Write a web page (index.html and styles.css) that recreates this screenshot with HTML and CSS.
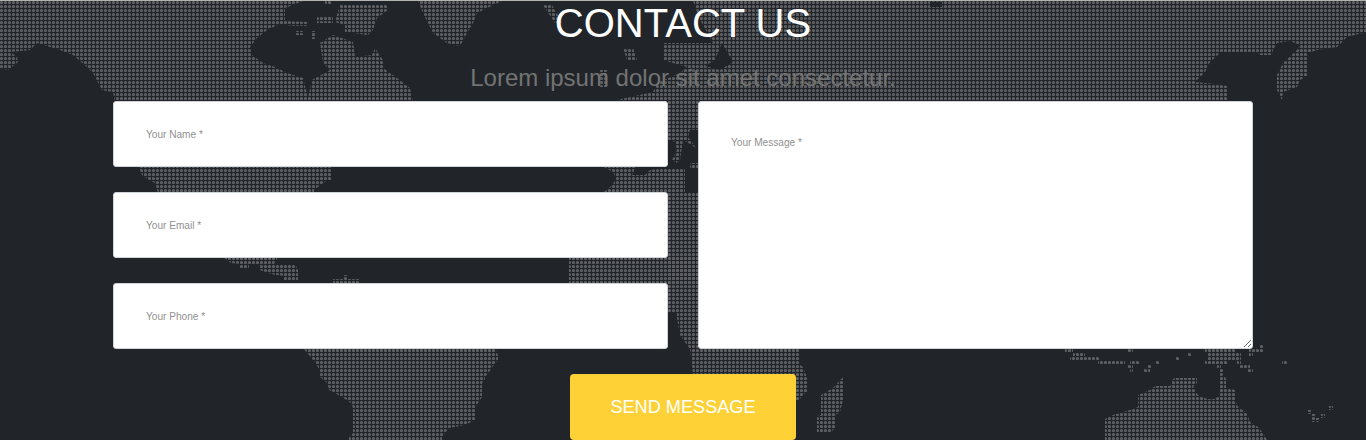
FILE: index.html
```html
<!DOCTYPE html>
<html lang="en">

<head>
    <meta charset="UTF-8">
    <meta name="viewport" content="width=device-width, initial-scale=1">
    <title>Contact Us</title>
    <link rel="stylesheet" href="styles.css">
</head>

<body>
    <section class="contact">
        <svg class="map" width="1366" height="440" viewBox="0 0 1366 440" aria-hidden="true">
            <defs>
                <pattern id="dots" width="4" height="4" patternUnits="userSpaceOnUse">
                    <circle cx="1.5" cy="2.5" r="1.6" fill="#5d5f62"></circle>
                </pattern>
            </defs>
            <g fill="url(#dots)">
                <!-- north america / top left -->
                <polygon points="0,1 303,1 285,8 285,21 307,22 307,26 293,26 280,24 267,30 257,38 250,47 252,55 263,63 275,67 287,73 303,78 308,98 312,80 330,70 323,63 320,43 333,35 353,42 355,57 372,55 375,48 383,60 383,68 397,78 410,88 413,102 115,102 113,92 102,90 93,73 87,67 73,55 60,50 37,43 30,50 10,52 17,57 18,62 8,70 0,68"></polygon>
                <polygon points="295,31 303,31 303,35 295,35"></polygon>
                <polygon points="311,31 315,31 315,39 311,39"></polygon>
                <polygon points="317,16 333,16 333,23 317,23"></polygon>
                <polygon points="325,1 332,1 332,4 325,4"></polygon>
                <polygon points="337,15 340,5 387,4 388,10 377,18 373,30 368,35 345,32 345,25 335,22"></polygon>
                <polygon points="418,1 502,1 483,10 477,13 473,23 467,33 460,46 447,43 433,33 423,13"></polygon>
                <polygon points="543,5 552,5 562,23 555,23"></polygon>
                <polygon points="623,48 633,48 637,60 627,60"></polygon>
                <polygon points="600,70 608,70 608,87 600,87"></polygon>
                <!-- top band right of the title -->
                <polygon points="693,1 1366,1 1366,32 1347,37 1337,47 1317,50 1308,53 1308,75 1300,80 1297,87 1283,92 1282,100 1277,90 1277,75 1283,63 1297,50 1300,45 1290,41 1277,43 1273,50 1272,55 1260,55 1257,52 1250,52 1220,53 1210,62 1205,72 1195,82 1215,84 1227,86 1227,102 608,102 653,92 657,83 680,73 687,67 673,63 663,60 663,43 713,43 700,20"></polygon>
                <!-- between and below the fields -->
                <polygon points="138,166 331,166 331,180 327,180 322,184 314,190 314,193 158,193 155,183 149,180 142,175"></polygon>
                <polygon points="223,257 278,257 274,264 295,264 298,270 298,280 284,280 284,276 271,274 260,270 260,265 249,265 249,269 240,269 240,264 231,263"></polygon>
                <polygon points="333,279 360,279 360,284 333,284"></polygon>
                <polygon points="343,275 347,275 347,279 343,279"></polygon>
                <polygon points="569,257 698,257 698,284 569,284"></polygon>
                <polygon points="602,166 636,166 632,175 645,175 650,170 668,168 685,168 685,193 602,193 607,190 613,184 616,178 613,172"></polygon>
                <polygon points="660,100 698,100 698,130 690,130 688,137 698,150 692,145 683,140 680,160 676,163 672,160 677,150 675,142 668,140 660,140"></polygon>
                <polygon points="690,163 698,163 698,169 690,169"></polygon>
                <polygon points="668,192 698,192 698,349 690,349 680,335 677,318 677,312 668,312"></polygon>
                <!-- africa and madagascar -->
                <polygon points="690,349 800,349 800,365 803,367 807,378 807,392 803,395 799,400 790,400 790,374 693,374"></polygon>
                <polygon points="843,377 843,400 840,412 835,415 835,428 830,433 817,433 817,416 821,415 821,395 833,388"></polygon>
                <!-- south america -->
                <polygon points="304,349 495,349 498,355 498,360 495,363 489,372 485,377 485,380 482,383 482,397 478,403 475,408 475,420 465,425 449,428 445,433 442,437 442,440 349,440 349,437 353,433 353,408 351,403 342,397 333,392 329,390 327,383 324,380 320,377 320,372 316,363 313,360 309,355"></polygon>
                <!-- australia -->
                <polygon points="1175,378 1197,378 1197,383 1193,387 1198,395 1207,399 1215,399 1220,395 1220,374 1226,378 1226,388 1235,390 1235,400 1238,407 1247,413 1250,422 1258,427 1263,433 1267,440 1105,440 1105,419 1113,415 1127,411 1138,407 1138,395 1150,390 1155,386 1170,386 1172,380"></polygon>
                <!-- islands, one row of dots each -->
                <path d="M1065 349h8v4h-8zM1073 353h12v4h-12zM1070 357h30v4h-30zM1098 361h27v4h-27zM1130 361h10v4h-10zM1127 365h6v4h-6zM1147 365h5v4h-5zM1130 369h3v4h-3zM1143 369h7v4h-7zM1127 349h6v4h-6zM1155 361h5v4h-5zM1188 353h3v4h-3zM1176 357h3v4h-3z"></path>
                <path d="M1205 349h30v4h-30zM1208 353h33v4h-33zM1208 357h33v4h-33zM1205 361h22v4h-22zM1237 361h4v4h-4zM1217 365h4v4h-4zM1240 365h10v4h-10zM1248 369h5v4h-5zM1220 369h3v6h-3zM1249 349h14v4h-14zM1249 353h4v4h-4zM1260 345h3v4h-3zM1282 361h5v4h-5z"></path>
                <path d="M1308 410h4v4h-4zM1329 406h4v4h-4zM1321 414h4v4h-4zM1312 414h4v4h-4zM1312 418h8v4h-8z"></path>
            </g>
            <!-- gulfs cut out of the top band -->
            <g fill="#212529">
                <polygon points="722,43 733,62 720,70 705,66 715,60"></polygon>
                <polygon points="930,2 942,2 942,7 930,7"></polygon>
            </g>
        </svg>

        <div class="container">
            <h1>CONTACT US</h1>
            <p class="lead">Lorem ipsum dolor sit amet consectetur.</p>

            <form class="contact-form">
                <div class="fields">
                    <input type="text" placeholder="Your Name *">
                    <input type="email" placeholder="Your Email *">
                    <input type="tel" placeholder="Your Phone *">
                </div>
                <textarea placeholder="Your Message *"></textarea>
                <button type="submit">SEND MESSAGE</button>
            </form>
        </div>
    </section>
</body>

</html>
```

FILE: styles.css
```css
html,
body {
    margin: 0;
    height: 440px;
    overflow: hidden;
}

body {
    font-family: "Liberation Sans", Arial, sans-serif;
    background-color: #212529;
}

.contact {
    position: relative;
    height: 439px;
    border-top: 1px solid #b4b4b4;
    overflow: hidden;
}

.map {
    position: absolute;
    top: -1px;
    left: 0;
}

.container {
    position: relative;
    width: 1140px;
    margin: 0 auto;
    text-align: center;
}

h1 {
    margin: 0;
    font-size: 40px;
    font-weight: 400;
    line-height: 44px;
    color: #fff;
}

.lead {
    margin: 19px 0 9px;
    font-size: 24px;
    line-height: 28px;
    color: #737373;
}

.contact-form {
    display: grid;
    grid-template-columns: 1fr 1fr;
    column-gap: 30px;
    row-gap: 25px;
}

.fields {
    display: flex;
    flex-direction: column;
    gap: 25px;
}

.contact-form input,
.contact-form textarea {
    box-sizing: border-box;
    width: 100%;
    margin: 0;
    padding: 0 32px;
    font-family: inherit;
    font-size: 10.1px;
    color: #495057;
    background-color: #fff;
    border: 1px solid #ced4da;
    border-radius: 3px;
    outline: none;
}

.contact-form input {
    height: 66px;
}

.contact-form textarea {
    display: block;
    height: 248px;
    padding-top: 35px;
}

.contact-form input::placeholder,
.contact-form textarea::placeholder {
    color: #909090;
    opacity: 1;
}

.contact-form button {
    grid-column: 1 / 3;
    justify-self: center;
    box-sizing: border-box;
    width: 226px;
    height: 66px;
    padding: 0;
    font-family: inherit;
    font-size: 18.15px;
    color: #fff;
    background-color: #fed136;
    border: none;
    border-radius: 4px;
    cursor: pointer;
}
```
